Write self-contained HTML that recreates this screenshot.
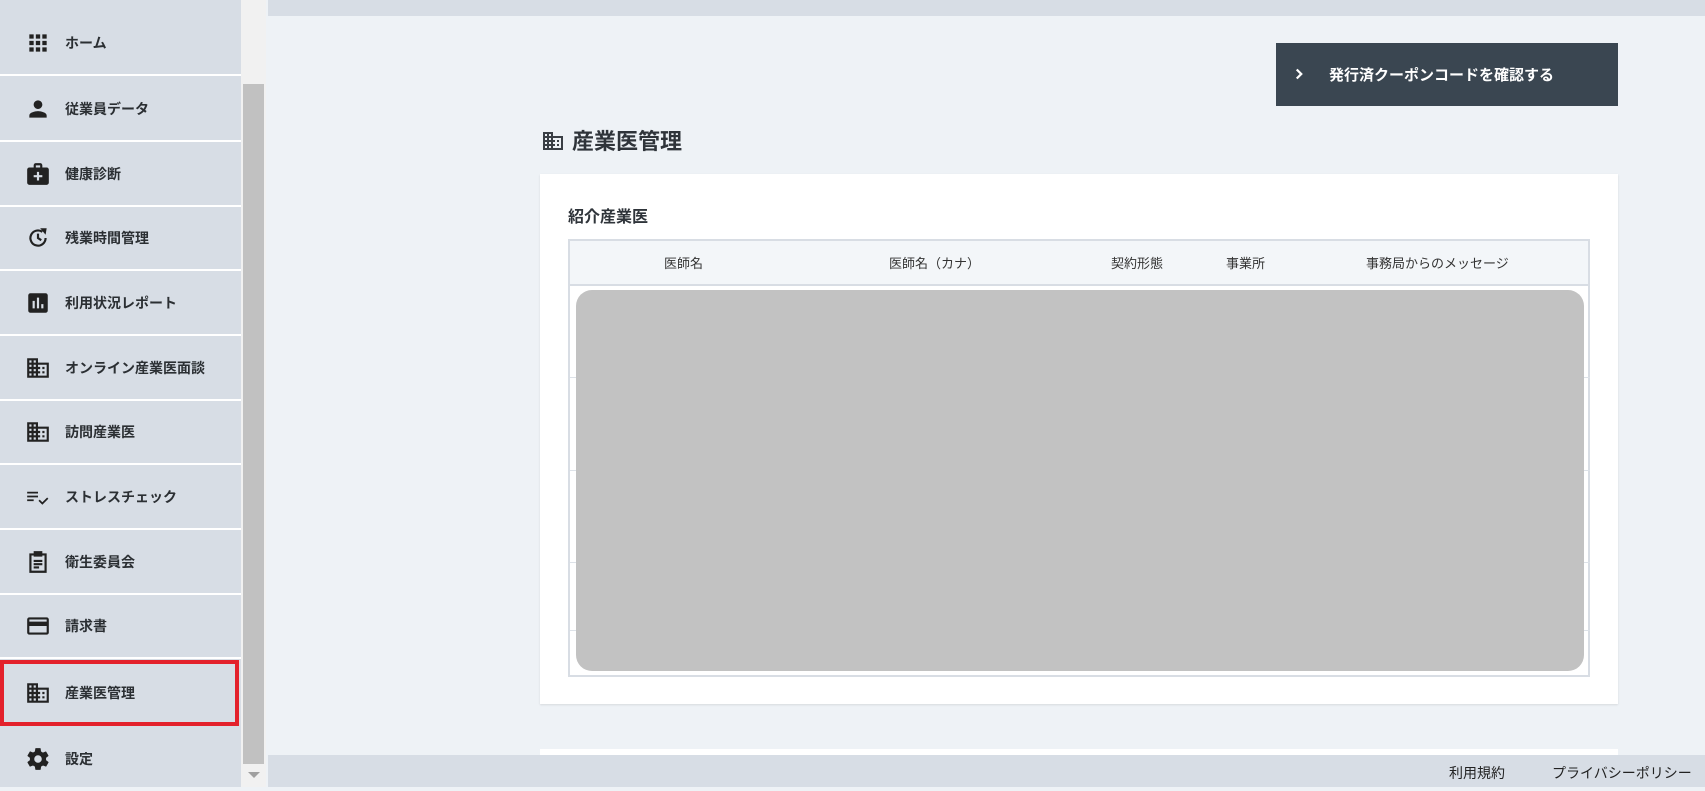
<!DOCTYPE html>
<html><head><meta charset="utf-8"><style>
*{box-sizing:border-box;margin:0;padding:0}
body{width:1705px;height:787px;overflow:hidden;background:#eef2f6;font-family:"Liberation Sans","Noto Sans CJK JP",sans-serif;color:#2b2f33;position:relative}
.side{position:absolute;left:0;top:0;width:241px;height:787px;background:#d7dde5}
.item{position:absolute;left:0;width:241px;height:64px;border-bottom:2px solid #fff;display:flex;align-items:center;font-size:14px;font-weight:600;color:#2b2f33}
.item svg{position:absolute;left:25px;width:26px;height:26px}
.item span{position:absolute;left:65px}
.sb{position:absolute;left:241px;top:0;width:25px;height:787px;background:#f1f1f1}
.thumb{position:absolute;left:243px;top:84px;width:21px;height:680px;background:#c1c1c1}
.top{position:absolute;left:268px;top:0;right:0;height:16px;background:#d7dde5}
.foot{position:absolute;left:268px;top:755px;right:0;height:32px;background:#d7dde5;font-size:14px;color:#222}
.btn{position:absolute;left:1276px;top:43px;width:342px;height:63px;background:#3a4651;color:#fff;font-size:15px;font-weight:bold}
.card{position:absolute;left:540px;top:174px;width:1078px;height:530px;background:#fff;box-shadow:0 1px 2px rgba(0,0,0,.1)}
.th{position:absolute;font-size:13px;color:#333;top:253px}
.line{position:absolute;left:570px;width:1020px;height:1px;background:#dde2e8}
</style></head><body>
<div class="side">
<div class="item" style="top:12px"><svg viewBox="0 0 24 24"><path fill="#222" d="M4 8h4V4H4v4zm6 12h4v-4h-4v4zm-6 0h4v-4H4v4zm0-6h4v-4H4v4zm6 0h4v-4h-4v4zm6-10v4h4V4h-4zm-6 4h4V4h-4v4zm6 6h4v-4h-4v4zm0 6h4v-4h-4v4z"/></svg><span>ホーム</span></div>
<div class="item" style="top:78px"><svg viewBox="0 0 24 24"><path fill="#222" d="M12 12c2.2 0 4-1.8 4-4s-1.8-4-4-4-4 1.8-4 4 1.8 4 4 4zm0 2c-2.7 0-8 1.3-8 4v2h16v-2c0-2.7-5.3-4-8-4z"/></svg><span>従業員データ</span></div>
<div class="item" style="top:143px"><svg viewBox="0 0 24 24"><path fill="#222" d="M20 6h-4V4c0-1.1-.9-2-2-2h-4c-1.1 0-2 .9-2 2v2H4c-1.1 0-2 .9-2 2v12c0 1.1.9 2 2 2h16c1.1 0 2-.9 2-2V8c0-1.1-.9-2-2-2zM10 4h4v2h-4V4zm6 11h-3v3h-2v-3H8v-2h3v-3h2v3h3v2z"/></svg><span>健康診断</span></div>
<div class="item" style="top:207px"><svg viewBox="0 0 24 24"><path fill="none" stroke="#222" stroke-width="2" d="M19 12a7 7 0 1 1-3-5.7M12 8v4l3 2"/><path fill="#222" d="M14 3l6 0-1 6z"/></svg><span>残業時間管理</span></div>
<div class="item" style="top:272px"><svg viewBox="0 0 24 24"><path fill="#222" d="M19 3H5c-1.1 0-2 .9-2 2v14c0 1.1.9 2 2 2h14c1.1 0 2-.9 2-2V5c0-1.1-.9-2-2-2zM9 17H7v-7h2v7zm4 0h-2V7h2v10zm4 0h-2v-4h2v4z"/></svg><span>利用状況レポート</span></div>
<div class="item" style="top:337px"><svg viewBox="0 0 24 24"><path fill="#222" d="M12 7V3H2v18h20V7H12zM6 19H4v-2h2v2zm0-4H4v-2h2v2zm0-4H4V9h2v2zm0-4H4V5h2v2zm4 12H8v-2h2v2zm0-4H8v-2h2v2zm0-4H8V9h2v2zm0-4H8V5h2v2zm10 12h-8v-2h2v-2h-2v-2h2v-2h-2V9h8v10zm-2-8h-2v2h2v-2zm0 4h-2v2h2v-2z"/></svg><span>オンライン産業医面談</span></div>
<div class="item" style="top:401px"><svg viewBox="0 0 24 24"><path fill="#222" d="M12 7V3H2v18h20V7H12zM6 19H4v-2h2v2zm0-4H4v-2h2v2zm0-4H4V9h2v2zm0-4H4V5h2v2zm4 12H8v-2h2v2zm0-4H8v-2h2v2zm0-4H8V9h2v2zm0-4H8V5h2v2zm10 12h-8v-2h2v-2h-2v-2h2v-2h-2V9h8v10zm-2-8h-2v2h2v-2zm0 4h-2v2h2v-2z"/></svg><span>訪問産業医</span></div>
<div class="item" style="top:466px"><svg viewBox="0 0 24 24"><path fill="none" stroke="#222" stroke-width="1.6" d="M2 8h10M2 11.5h10M2 15h6M13 15l3 3 5-5"/></svg><span>ストレスチェック</span></div>
<div class="item" style="top:531px"><svg viewBox="0 0 24 24"><path fill="none" stroke="#222" stroke-width="2" d="M5 5h14v16H5zM9 3h6v3H9zM8 11h8M8 14h8M8 17h5"/></svg><span>衛生委員会</span></div>
<div class="item" style="top:595px"><svg viewBox="0 0 24 24"><path fill="#222" d="M20 4H4c-1.1 0-2 .9-2 2v12c0 1.1.9 2 2 2h16c1.1 0 2-.9 2-2V6c0-1.1-.9-2-2-2zm0 14H4v-6h16v6zm0-10H4V6h16v2z"/></svg><span>請求書</span></div>
<div class="item" style="top:660px;border:4px solid #e3212b;height:66px;width:239px"><svg viewBox="0 0 24 24" style="left:21px"><path fill="#222" d="M12 7V3H2v18h20V7H12zM6 19H4v-2h2v2zm0-4H4v-2h2v2zm0-4H4V9h2v2zm0-4H4V5h2v2zm4 12H8v-2h2v2zm0-4H8v-2h2v2zm0-4H8V9h2v2zm0-4H8V5h2v2zm10 12h-8v-2h2v-2h-2v-2h2v-2h-2V9h8v10zm-2-8h-2v2h2v-2zm0 4h-2v2h2v-2z"/></svg><span style="left:61px">産業医管理</span></div>
<div class="item" style="top:727px;border:none"><svg viewBox="0 0 24 24"><path fill="#222" d="M19.4 13c.04-.3.06-.6.06-1s-.02-.7-.07-1l2.1-1.6c.2-.15.24-.42.12-.64l-2-3.460c-.12-.22-.39-.3-.61-.22l-2.5 1c-.52-.4-1.080-.73-1.690-.98l-.38-2.650A.49.49 0 0 0 14 2h-4c-.25 0-.46.18-.49.42l-.38 2.65c-.61.25-1.17.59-1.69.98l-2.49-1c-.23-.09-.49 0-.61.22l-2 3.46c-.13.22-.07.49.12.64L4.57 11c-.05.3-.07.63-.07 1s.02.7.07 1l-2.11 1.65c-.19.15-.24.42-.12.64l2 3.46c.12.22.39.3.61.22l2.49-1c.52.4 1.08.73 1.69.98l.38 2.65c.03.24.24.42.49.42h4c.25 0 .46-.18.49-.42l.38-2.65c.61-.25 1.17-.59 1.69-.98l2.49 1c.23.09.49 0 .61-.22l2-3.46c.12-.22.07-.49-.12-.64L19.4 13zM12 15.5A3.5 3.5 0 1 1 12 8.5a3.5 3.5 0 0 1 0 7z"/></svg><span>設定</span></div>
</div>
<div class="sb"></div><div class="thumb"></div>
<div style="position:absolute;left:248px;top:772px;width:0;height:0;border-left:6px solid transparent;border-right:6px solid transparent;border-top:6px solid #a0a0a0"></div>
<div class="top"></div>
<div class="btn"><svg style="position:absolute;left:14px;top:22px" width="18" height="18" viewBox="0 0 24 24"><path fill="none" stroke="#fff" stroke-width="3" d="M9 6l6 6-6 6"/></svg><span style="position:absolute;left:53px;top:21px">発行済クーポンコードを確認する</span></div>
<svg style="position:absolute;left:541px;top:129px" width="24" height="24" viewBox="0 0 24 24"><path fill="#3a3f45" d="M12 7V3H2v18h20V7H12zM6 19H4v-2h2v2zm0-4H4v-2h2v2zm0-4H4V9h2v2zm0-4H4V5h2v2zm4 12H8v-2h2v2zm0-4H8v-2h2v2zm0-4H8V9h2v2zm0-4H8V5h2v2zm10 12h-8v-2h2v-2h-2v-2h2v-2h-2V9h8v10zm-2-8h-2v2h2v-2zm0 4h-2v2h2v-2z"/></svg>
<div style="position:absolute;left:572px;top:124px;font-size:22px;font-weight:bold;color:#2f343a">産業医管理</div>
<div class="card"></div>
<div style="position:absolute;left:568px;top:203px;font-size:16px;font-weight:bold;color:#2f343a">紹介産業医</div>
<div style="position:absolute;left:568px;top:239px;width:1022px;height:438px;border:2px solid #d8dde4;background:#fff"></div>
<div style="position:absolute;left:570px;top:241px;width:1018px;height:45px;background:#f3f6f9;border-bottom:2px solid #d8dde4"></div>
<div class="th" style="left:664px">医師名</div>
<div class="th" style="left:889px">医師名（カナ）</div>
<div class="th" style="left:1111px">契約形態</div>
<div class="th" style="left:1226px">事業所</div>
<div class="th" style="left:1366px">事務局からのメッセージ</div>
<div class="line" style="top:377px"></div><div class="line" style="top:470px"></div><div class="line" style="top:562px"></div><div class="line" style="top:630px"></div>
<div style="position:absolute;left:576px;top:290px;width:1008px;height:381px;background:#c2c2c2;border-radius:16px"></div>
<div style="position:absolute;left:540px;top:749px;width:1078px;height:10px;background:#fff"></div>
<div class="foot"><span style="position:absolute;left:1181px;top:8px">利用規約</span><span style="position:absolute;left:1284px;top:8px">プライバシーポリシー</span></div>
</body></html>
